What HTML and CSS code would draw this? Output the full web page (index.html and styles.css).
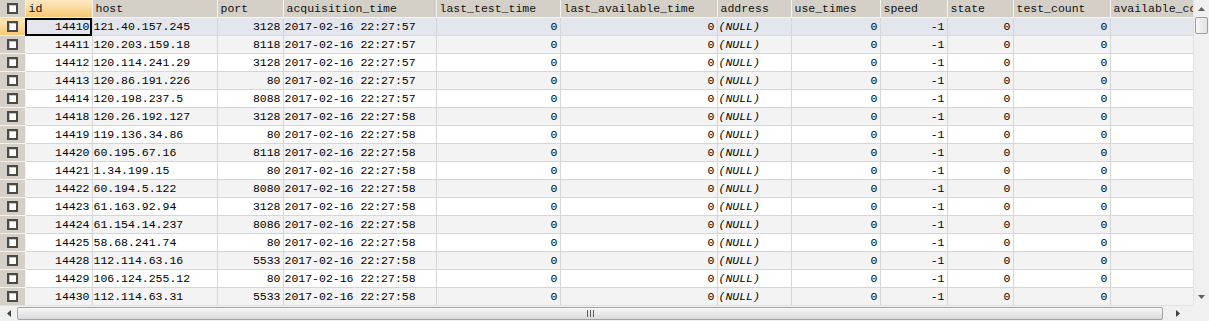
FILE: index.html
```html
<!DOCTYPE html>
<html lang="en">
<head>
    <meta charset="UTF-8">
    <title>proxy_ip - Data</title>
    <link rel="stylesheet" href="styles.css">
</head>
<body>
<div class="grid-window">
    <div class="table-wrap">
        <table class="data-grid">
            <colgroup>
                <col class="w-check">
                <col class="w-id">
                <col class="w-host">
                <col class="w-port">
                <col class="w-acq">
                <col class="w-ltt">
                <col class="w-lat">
                <col class="w-addr">
                <col class="w-use">
                <col class="w-speed">
                <col class="w-state">
                <col class="w-tc">
                <col class="w-ac">
            </colgroup>
            <thead>
            <tr>
                <th class="check"><span class="box"></span></th>
                <th class="sorted">id</th>
                <th>host</th>
                <th>port</th>
                <th>acquisition_time</th>
                <th>last_test_time</th>
                <th>last_available_time</th>
                <th>address</th>
                <th>use_times</th>
                <th>speed</th>
                <th>state</th>
                <th>test_count</th>
                <th>available_count</th>
            </tr>
            </thead>
            <tbody>
            <tr class="selected">
                <td class="check current"><span class="box"></span></td>
                <td class="num focus">14410</td><td>121.40.157.245</td><td class="num">3128</td><td>2017-02-16 22:27:57</td>
                <td class="num">0</td><td class="num">0</td><td class="null">(NULL)</td><td class="num">0</td><td class="num">-1</td><td class="num">0</td><td class="num">0</td><td></td>
            </tr>
            <tr>
                <td class="check"><span class="box"></span></td>
                <td class="num">14411</td><td>120.203.159.18</td><td class="num">8118</td><td>2017-02-16 22:27:57</td>
                <td class="num">0</td><td class="num">0</td><td class="null">(NULL)</td><td class="num">0</td><td class="num">-1</td><td class="num">0</td><td class="num">0</td><td></td>
            </tr>
            <tr>
                <td class="check"><span class="box"></span></td>
                <td class="num">14412</td><td>120.114.241.29</td><td class="num">3128</td><td>2017-02-16 22:27:57</td>
                <td class="num">0</td><td class="num">0</td><td class="null">(NULL)</td><td class="num">0</td><td class="num">-1</td><td class="num">0</td><td class="num">0</td><td></td>
            </tr>
            <tr>
                <td class="check"><span class="box"></span></td>
                <td class="num">14413</td><td>120.86.191.226</td><td class="num">80</td><td>2017-02-16 22:27:57</td>
                <td class="num">0</td><td class="num">0</td><td class="null">(NULL)</td><td class="num">0</td><td class="num">-1</td><td class="num">0</td><td class="num">0</td><td></td>
            </tr>
            <tr>
                <td class="check"><span class="box"></span></td>
                <td class="num">14414</td><td>120.198.237.5</td><td class="num">8088</td><td>2017-02-16 22:27:57</td>
                <td class="num">0</td><td class="num">0</td><td class="null">(NULL)</td><td class="num">0</td><td class="num">-1</td><td class="num">0</td><td class="num">0</td><td></td>
            </tr>
            <tr>
                <td class="check"><span class="box"></span></td>
                <td class="num">14418</td><td>120.26.192.127</td><td class="num">3128</td><td>2017-02-16 22:27:58</td>
                <td class="num">0</td><td class="num">0</td><td class="null">(NULL)</td><td class="num">0</td><td class="num">-1</td><td class="num">0</td><td class="num">0</td><td></td>
            </tr>
            <tr>
                <td class="check"><span class="box"></span></td>
                <td class="num">14419</td><td>119.136.34.86</td><td class="num">80</td><td>2017-02-16 22:27:58</td>
                <td class="num">0</td><td class="num">0</td><td class="null">(NULL)</td><td class="num">0</td><td class="num">-1</td><td class="num">0</td><td class="num">0</td><td></td>
            </tr>
            <tr>
                <td class="check"><span class="box"></span></td>
                <td class="num">14420</td><td>60.195.67.16</td><td class="num">8118</td><td>2017-02-16 22:27:58</td>
                <td class="num">0</td><td class="num">0</td><td class="null">(NULL)</td><td class="num">0</td><td class="num">-1</td><td class="num">0</td><td class="num">0</td><td></td>
            </tr>
            <tr>
                <td class="check"><span class="box"></span></td>
                <td class="num">14421</td><td>1.34.199.15</td><td class="num">80</td><td>2017-02-16 22:27:58</td>
                <td class="num">0</td><td class="num">0</td><td class="null">(NULL)</td><td class="num">0</td><td class="num">-1</td><td class="num">0</td><td class="num">0</td><td></td>
            </tr>
            <tr>
                <td class="check"><span class="box"></span></td>
                <td class="num">14422</td><td>60.194.5.122</td><td class="num">8080</td><td>2017-02-16 22:27:58</td>
                <td class="num">0</td><td class="num">0</td><td class="null">(NULL)</td><td class="num">0</td><td class="num">-1</td><td class="num">0</td><td class="num">0</td><td></td>
            </tr>
            <tr>
                <td class="check"><span class="box"></span></td>
                <td class="num">14423</td><td>61.163.92.94</td><td class="num">3128</td><td>2017-02-16 22:27:58</td>
                <td class="num">0</td><td class="num">0</td><td class="null">(NULL)</td><td class="num">0</td><td class="num">-1</td><td class="num">0</td><td class="num">0</td><td></td>
            </tr>
            <tr>
                <td class="check"><span class="box"></span></td>
                <td class="num">14424</td><td>61.154.14.237</td><td class="num">8086</td><td>2017-02-16 22:27:58</td>
                <td class="num">0</td><td class="num">0</td><td class="null">(NULL)</td><td class="num">0</td><td class="num">-1</td><td class="num">0</td><td class="num">0</td><td></td>
            </tr>
            <tr>
                <td class="check"><span class="box"></span></td>
                <td class="num">14425</td><td>58.68.241.74</td><td class="num">80</td><td>2017-02-16 22:27:58</td>
                <td class="num">0</td><td class="num">0</td><td class="null">(NULL)</td><td class="num">0</td><td class="num">-1</td><td class="num">0</td><td class="num">0</td><td></td>
            </tr>
            <tr>
                <td class="check"><span class="box"></span></td>
                <td class="num">14428</td><td>112.114.63.16</td><td class="num">5533</td><td>2017-02-16 22:27:58</td>
                <td class="num">0</td><td class="num">0</td><td class="null">(NULL)</td><td class="num">0</td><td class="num">-1</td><td class="num">0</td><td class="num">0</td><td></td>
            </tr>
            <tr>
                <td class="check"><span class="box"></span></td>
                <td class="num">14429</td><td>106.124.255.12</td><td class="num">80</td><td>2017-02-16 22:27:58</td>
                <td class="num">0</td><td class="num">0</td><td class="null">(NULL)</td><td class="num">0</td><td class="num">-1</td><td class="num">0</td><td class="num">0</td><td></td>
            </tr>
            <tr>
                <td class="check"><span class="box"></span></td>
                <td class="num">14430</td><td>112.114.63.31</td><td class="num">5533</td><td>2017-02-16 22:27:58</td>
                <td class="num">0</td><td class="num">0</td><td class="null">(NULL)</td><td class="num">0</td><td class="num">-1</td><td class="num">0</td><td class="num">0</td><td></td>
            </tr>
            </tbody>
        </table>
    </div>

    <!-- vertical scrollbar -->
    <div class="vscroll">
        <span class="arrow"><svg width="7" height="4" viewBox="0 0 7 4"><path d="M0 4 L3.5 0 L7 4 Z" fill="#606060"/></svg></span>
        <span class="vthumb"></span>
        <span class="track"></span>
        <span class="arrow"><svg width="7" height="4" viewBox="0 0 7 4"><path d="M0 0 L3.5 4 L7 0 Z" fill="#606060"/></svg></span>
    </div>

    <!-- horizontal scrollbar -->
    <div class="hscroll">
        <span class="arrow"><svg width="4" height="7" viewBox="0 0 4 7"><path d="M4 0 L0 3.5 L4 7 Z" fill="#404040"/></svg></span>
        <span class="hthumb"><span class="grip"></span></span>
        <span class="arrow"><svg width="4" height="7" viewBox="0 0 4 7"><path d="M0 0 L4 3.5 L0 7 Z" fill="#404040"/></svg></span>
    </div>
    <div class="corner"></div>
</div>
</body>
</html>
```

FILE: styles.css
```css
body {
    margin: 0;
    padding: 0;
    background-color: #ffffff;
    font-family: "Liberation Mono", "Courier New", monospace;
    font-size: 11.5px;
    color: #000000;
    overflow: hidden;
}

.grid-window {
    display: grid;
    grid-template-columns: 1193px 16px;
    grid-template-rows: 305px 16px;
    width: 1209px;
    height: 321px;
}

.table-wrap {
    overflow: hidden;
}

.data-grid {
    border-collapse: collapse;
    table-layout: fixed;
    width: 1210px;
}

.w-check { width: 25px; }
.w-id { width: 67px; }
.w-host { width: 125px; }
.w-port { width: 66px; }
.w-acq { width: 153px; }
.w-ltt { width: 124px; }
.w-lat { width: 157px; }
.w-addr { width: 74px; }
.w-use { width: 89px; }
.w-speed { width: 67px; }
.w-state { width: 66px; }
.w-tc { width: 97px; }
.w-ac { width: 100px; }

.data-grid th,
.data-grid td {
    height: 17px;
    padding: 0 2px 0 1px;
    border: 1px solid #d6d6d6;
    white-space: nowrap;
    overflow: hidden;
    line-height: 17px;
    text-align: left;
}

.data-grid th {
    font-weight: normal;
    padding-left: 3px;
    color: #101010;
    background-color: #d4d0c8;
    border-color: #f4f3ef;
    border-top: none;
}

.data-grid th.sorted {
    background: linear-gradient(#fde9c3, #f6c873);
}

.data-grid tbody tr:nth-child(even) td {
    background-color: #f3f3f3;
}

.data-grid tbody tr.selected td {
    background-color: #e4e6ee;
}

.data-grid td.num {
    text-align: right;
}

.data-grid td.null {
    font-style: italic;
}

.data-grid td.focus {
    outline: 2px solid #000000;
    outline-offset: -2px;
}

/* row selector column */
.data-grid th.check,
.data-grid tbody tr td.check {
    padding: 0;
    text-align: center;
    background-color: #d4d0c8;
    border-color: #f4f3ef;
    border-left: none;
}

.data-grid tbody tr.selected td.check.current {
    background: linear-gradient(#fde9c3, #f6c873);
}

.box {
    display: inline-block;
    width: 7px;
    height: 7px;
    margin-top: 3px;
    vertical-align: top;
    background-color: #ffffff;
    border: 2px solid #4a4a4a;
    box-shadow: inset 1px 1px 0 #c4c4c4;
}

/* scrollbars */
.vscroll {
    display: flex;
    flex-direction: column;
    background-color: #f0f0f0;
    border-left: 1px solid #e2e2e2;
}

.vscroll .arrow {
    height: 17px;
    display: flex;
    align-items: center;
    justify-content: center;
}

.vthumb {
    height: 15px;
    margin: 0 1px 0 1px;
    border: 1px solid #9e9e9e;
    border-radius: 2px;
    background: linear-gradient(90deg, #f6f6f6, #e2e2e2);
}

.vscroll .track {
    flex: 1;
}

.hscroll {
    display: flex;
    background-color: #f0f0f0;
    border-top: 1px solid #e2e2e2;
}

.hscroll .arrow {
    width: 17px;
    display: flex;
    align-items: center;
    justify-content: center;
}

.hscroll .arrow:last-child {
    width: 30px;
}

.hthumb {
    flex: 1;
    margin: 1px 0;
    display: flex;
    align-items: center;
    justify-content: center;
    border: 1px solid #a4a4a4;
    border-radius: 2px;
    background: linear-gradient(#f7f7f7, #dadada);
}

.grip {
    width: 7px;
    height: 7px;
    background: repeating-linear-gradient(90deg, #5a5a5a 0, #5a5a5a 1px, transparent 1px, transparent 3px);
}

.corner {
    background-color: #f0f0f0;
}
```
